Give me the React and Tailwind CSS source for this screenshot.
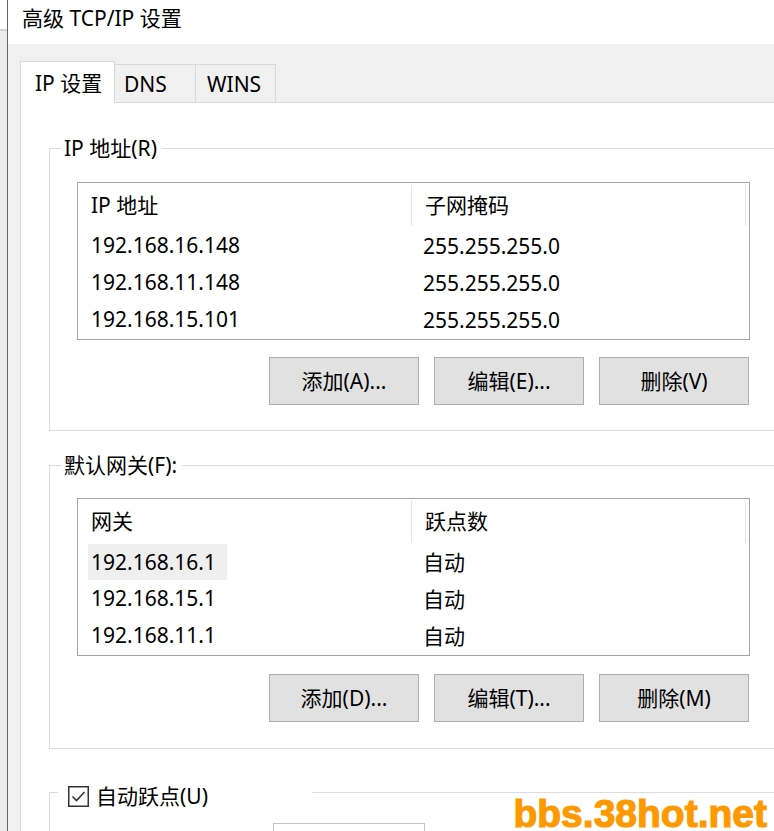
import React from "react";

const ipRows = [
  ["192.168.16.148", "255.255.255.0"],
  ["192.168.11.148", "255.255.255.0"],
  ["192.168.15.101", "255.255.255.0"],
];

const gatewayRows = [
  ["192.168.16.1", "自动"],
  ["192.168.15.1", "自动"],
  ["192.168.11.1", "自动"],
];

function ListView({ columns, rows, selected, className = "" }) {
  return (
    <div className={`ml-[27px] w-[673px] h-[158px] shrink-0 border border-[#a2a5ab] bg-white ${className}`}>
      <div className="flex h-[43px]">
        {columns.map((c) => (
          <div key={c} className="flex">
            <div className="w-[333px] pl-[13px] pt-[10px] leading-[24px]">{c}</div>
            <div className="mt-[2px] w-px bg-[#e5e5e5]" />
          </div>
        ))}
      </div>
      {rows.map((r, i) => (
        <div key={i} className="flex h-[37px] items-center pt-[2px]">
          <div className="w-[334px]">
            {selected === i ? (
              <span className="ml-[10px] inline-block w-[139px] bg-[#efefef] pl-[3px] leading-[36px]">{r[0]}</span>
            ) : (
              <span className="ml-[13px] leading-[24px]">{r[0]}</span>
            )}
          </div>
          <div className="pl-[11px] leading-[24px]">{r[1]}</div>
        </div>
      ))}
    </div>
  );
}

function Buttons({ labels, className = "" }) {
  return (
    <div className={`ml-[27px] flex w-[673px] justify-end gap-[15px] pr-px ${className}`}>
      {labels.map((l) => (
        <div
          key={l}
          className="flex h-[48px] w-[150px] shrink-0 items-center justify-center border border-[#adadad] bg-[#e1e1e1] leading-[24px]"
        >
          {l}
        </div>
      ))}
    </div>
  );
}

export default function App() {
  return (
    <div className="relative flex h-[831px] w-[774px] overflow-hidden bg-white text-[21px] text-black font-['Noto_Sans','Noto_Sans_CJK_SC',sans-serif]">
      {/* sliver of the window behind */}
      <div className="flex w-[7px] shrink-0 flex-col">
        <div className="h-[31px] shrink-0 border-b-2 border-[#d4d4d4] bg-white" />
        <div className="flex-1 bg-[#ececec]" />
      </div>
      <div className="w-px shrink-0 bg-[#646464]" />

      <div className="flex min-w-0 flex-1 flex-col">
        {/* title bar */}
        <div className="h-[44px] shrink-0 bg-white pl-[14px] pt-[6px] leading-[24px]">高级 TCP/IP 设置</div>

        <div className="flex flex-1 flex-col bg-[#f0f0f0] pl-[12px] pt-[17px]">
          {/* tabs */}
          <div className="flex h-[41px] shrink-0 items-end">
            <div className="relative z-10 -mb-px flex h-[42px] w-[95px] shrink-0 items-center border border-b-0 border-[#d9d9d9] bg-white pl-[14px] leading-[24px]">
              IP 设置
            </div>
            <div className="flex h-[38px] w-[81px] shrink-0 items-center border-t border-r border-[#d9d9d9] pl-[9px] leading-[24px]">
              DNS
            </div>
            <div className="flex h-[38px] w-[80px] shrink-0 items-center border-t border-r border-[#d9d9d9] pl-[11px] leading-[24px]">
              WINS
            </div>
          </div>

          {/* tab page */}
          <div className="flex-1 border-t border-l border-[#d9d9d9] bg-white pl-[28px]">
            <fieldset className="mt-[33px] w-[760px] border border-[#dcdcdc] pt-[22px] pb-[25px]">
              <legend className="ml-[11px] pl-[3px] pr-[5px] leading-[24px]">IP 地址(R)</legend>
              <ListView columns={["IP 地址", "子网掩码"]} rows={ipRows} />
              <Buttons className="mt-[17px]" labels={["添加(A)...", "编辑(E)...", "删除(V)"]} />
            </fieldset>

            <fieldset className="mt-[22px] w-[760px] border border-[#dcdcdc] pt-[21px] pb-[26px]">
              <legend className="ml-[11px] pl-[3px] pr-[5px] leading-[24px]">默认网关(F):</legend>
              <ListView columns={["网关", "跃点数"]} rows={gatewayRows} selected={0} />
              <Buttons className="mt-[18px]" labels={["添加(D)...", "编辑(T)...", "删除(M)"]} />
            </fieldset>

            <fieldset className="mt-[27px] w-[760px] border border-[#dcdcdc] pt-[15px]">
              <legend className="ml-[8px] flex w-[254px] items-center pt-[8px] pl-[10px] leading-[24px]">
                <svg width="21" height="21" viewBox="0 0 21 21" className="shrink-0">
                  <rect x="0.75" y="0.75" width="19.5" height="19.5" fill="white" stroke="#333" strokeWidth="1.5" />
                  <path d="M4.5 10.5 L8.5 14.5 L16.5 6" fill="none" stroke="#333" strokeWidth="1.6" />
                </svg>
                <span className="ml-[7px]">自动跃点(U)</span>
              </legend>
              <div className="ml-[223px] h-[40px] w-[152px] border border-[#c4c4c4]" />
            </fieldset>
          </div>
        </div>
      </div>

      <div className="absolute right-[7px] bottom-0 text-[39px] leading-[34px] font-bold text-[#ff9900] font-['Liberation_Sans',Arial,sans-serif] [-webkit-text-stroke:1.2px_#ff9900]">
        bbs.38hot.net
      </div>
    </div>
  );
}
